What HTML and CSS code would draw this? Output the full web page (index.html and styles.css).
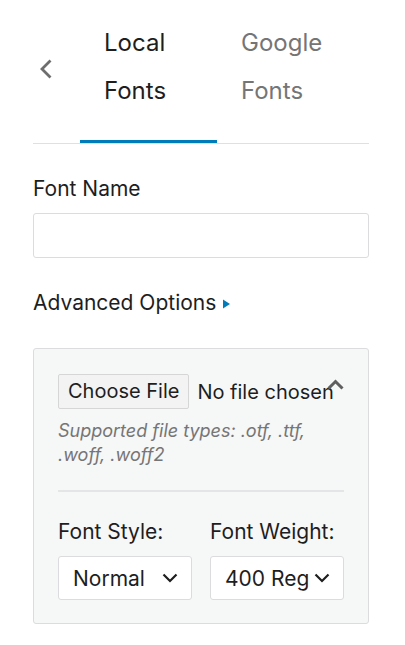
FILE: index.html
```html
<!DOCTYPE html>
<html lang="en">
<head>
<meta charset="utf-8">
<title>Local Fonts</title>
<link rel="stylesheet" href="styles.css">
</head>
<body>
<div class="page">
  <div class="tabs">
    <button class="back" type="button" aria-label="Back">
      <svg width="14" height="20" viewBox="0 0 14 20"><polyline points="11.5,1.5 3,10 11.5,18.5" fill="none" stroke="#6e6e6e" stroke-width="2.8"/></svg>
    </button>
    <div class="tab active">Local Fonts</div>
    <div class="tab">Google Fonts</div>
  </div>

  <div class="label name-label">Font Name</div>
  <div class="text-input"></div>

  <div class="advanced">
    <span>Advanced Options</span>
    <svg class="tri" width="7" height="10" viewBox="0 0 7 10"><polygon points="0,0.5 7,5 0,9.5" fill="#007cba"/></svg>
  </div>

  <div class="panel">
    <div class="file-row">
      <span class="file-btn">Choose File</span>
      <span class="file-none">No file chosen</span>
    </div>
    <svg class="collapse" width="17" height="12" viewBox="0 0 17 12"><polyline points="1.5,9.5 8.5,2.5 15.5,9.5" fill="none" stroke="#5f5f5f" stroke-width="3"/></svg>
    <p class="help">Supported file types: .otf, .ttf, .woff, .woff2</p>
    <div class="sep"></div>
    <div class="cols">
      <div class="col">
        <div class="label">Font Style:</div>
        <div class="select">
          <span class="sel-text">Normal</span>
          <svg width="16" height="10" viewBox="0 0 16 10"><polyline points="1.5,1.5 8,8 14.5,1.5" fill="none" stroke="#1e1e1e" stroke-width="2.2"/></svg>
        </div>
      </div>
      <div class="col">
        <div class="label">Font Weight:</div>
        <div class="select">
          <span class="sel-text">400 Regular</span>
          <svg width="16" height="10" viewBox="0 0 16 10"><polyline points="1.5,1.5 8,8 14.5,1.5" fill="none" stroke="#1e1e1e" stroke-width="2.2"/></svg>
        </div>
      </div>
    </div>
  </div>
</div>
</body>
</html>
```

FILE: styles.css
```css
* { box-sizing: border-box; }
html, body { margin: 0; background: #fff; }
body {
  font-family: Inter, "Noto Sans", sans-serif;
  color: #1e1e1e;
  font-size: 21px;
}
.page {
  padding: 0 36px 0 33px;
}
.tabs {
  display: flex;
  height: 144px;
  border-bottom: 1px solid #e0e0e0;
}
.back {
  flex: 0 0 47px;
  border: 0;
  background: none;
  padding: 0 0 6px 6px;
  display: flex;
  align-items: center;
  cursor: pointer;
}
.tab {
  position: relative;
  flex: 0 0 137px;
  padding: 19px 24px 0;
  font-size: 24px;
  line-height: 48px;
  color: #757575;
}
.tab.active { color: #1e1e1e; }
.tab.active::after {
  content: "";
  position: absolute;
  left: 0;
  right: 0;
  bottom: 0;
  height: 3px;
  background: #007cba;
}
.label {
  line-height: 24px;
}
.name-label {
  margin-top: 33px;
}
.text-input {
  margin-top: 12px;
  height: 45px;
  border: 1px solid #dcdcde;
  border-radius: 3px;
  background: #fff;
}
.advanced {
  margin-top: 33px;
  display: flex;
  align-items: center;
  gap: 7px;
  line-height: 24px;
}
.advanced .tri { margin-top: 1px; }
.panel {
  position: relative;
  margin-top: 33px;
  background: #f6f7f7;
  border: 1px solid #dcdcde;
  border-radius: 3px;
  padding: 25px 24px 23px;
}
.collapse {
  position: absolute;
  right: 24px;
  top: 30px;
  z-index: 1;
}
.file-row {
  display: flex;
  align-items: center;
  gap: 8px;
  white-space: nowrap;
  font-size: 20px;
}
.file-btn {
  height: 35px;
  line-height: 33px;
  padding: 0 9px;
  border: 1px solid #d6d6d6;
  border-radius: 2px;
  background: #f3f3f3;
}
.help {
  margin: 10px 0 0;
  font-size: 18px;
  line-height: 23.5px;
  font-style: italic;
  color: #757575;
}
.sep {
  margin-top: 24px;
  height: 2px;
  background: #e4e5e6;
}
.cols {
  margin-top: 28px;
  display: grid;
  grid-template-columns: minmax(0, 1fr) minmax(0, 1fr);
  column-gap: 18px;
}
.select {
  margin-top: 12px;
  height: 44px;
  display: flex;
  align-items: center;
  padding: 0 13px 0 14px;
  background: #fff;
  border: 1px solid #dcdcde;
  border-radius: 3px;
}
.sel-text {
  flex: 1;
  min-width: 0;
  overflow: hidden;
  white-space: nowrap;
}
.select svg { flex: none; margin-left: 4px; }
```
